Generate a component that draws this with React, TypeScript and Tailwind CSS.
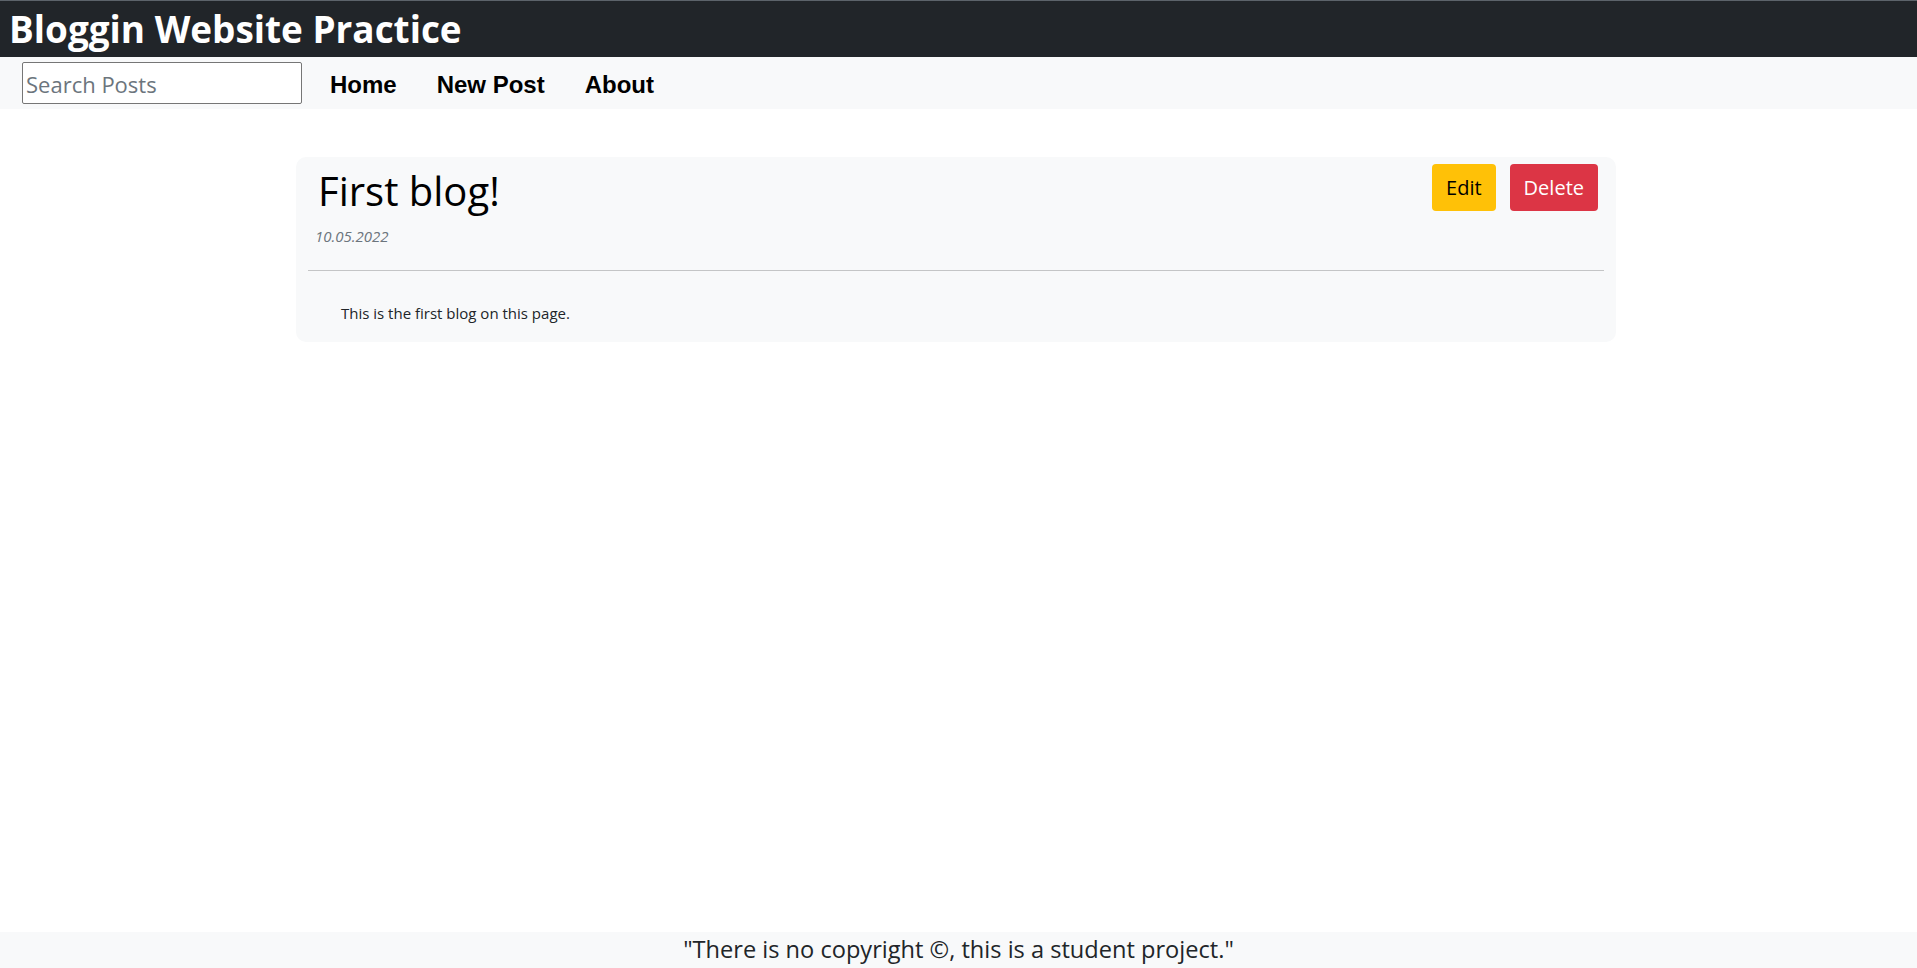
import React, { useState } from "react";

const segoe = "font-['Segoe_UI','Open_Sans',sans-serif]";

function Header() {
  return (
    <header className="h-[57px] bg-[#212529] border-t border-[#5c636a] flex items-center">
      <h1 className={`${segoe} text-white font-bold text-[36.9px] leading-none pl-[9px]`}>
        Bloggin Website Practice
      </h1>
    </header>
  );
}

function Nav() {
  const [search, setSearch] = useState("");

  return (
    <nav className="h-[52px] bg-[#f8f9fa] flex items-center pl-[22px]">
      <input
        type="text"
        value={search}
        onChange={(e) => setSearch(e.target.value)}
        placeholder="Search Posts"
        className={`${segoe} w-[280px] h-[42px] bg-white border border-[#767676] rounded-[2px] px-[3px] pt-[2px] text-[22px] text-[#212529] placeholder:text-[#6c757d] outline-none`}
      />
      <ul className="flex gap-[40px] ml-[28px] font-['Liberation_Sans',Arial,sans-serif] font-bold text-[24px] text-black mt-[3px]">
        <li>Home</li>
        <li>New Post</li>
        <li>About</li>
      </ul>
    </nav>
  );
}

function Post() {
  return (
    <article className={`${segoe} w-[1320px] mx-auto mt-[48px] bg-[#f8f9fa] rounded-[10px] px-[12px] pt-[7px] pb-[18px]`}>
      <div className="flex justify-between items-start">
        <div className="pl-[10px] pt-[3px]">
          <h2 className="text-[40px] font-medium leading-[1.2] text-black">First blog!</h2>
        </div>
        <div className="flex gap-[14px] pr-[6px]">
          <button className="bg-[#ffc107] text-black text-[20px] leading-[1.5] px-[14px] h-[47px] rounded-[4px]">
            Edit
          </button>
          <button className="bg-[#dc3545] text-white text-[20px] leading-[1.5] px-[14px] h-[47px] rounded-[4px]">
            Delete
          </button>
        </div>
      </div>
      <p className="italic text-[#6c757d] text-[15px] leading-[1.5] pl-[7px] mt-[10px]">10.05.2022</p>
      <hr className="border-0 border-t border-[#c4c5c6] mt-[22px]" />
      <p className="text-[#212529] text-[15px] leading-[1.5] pl-[33px] mt-[31px]">
        This is the first blog on this page.
      </p>
    </article>
  );
}

export default function App() {
  return (
    <div className="min-h-screen flex flex-col bg-white">
      <Header />
      <Nav />
      <main className="flex-1 pr-[5px]">
        <Post />
      </main>
      <footer className={`${segoe} h-[36px] bg-[#f8f9fa] flex items-center justify-center text-[#212529] text-[23.6px]`}>
        "There is no copyright ©, this is a student project."
      </footer>
    </div>
  );
}
